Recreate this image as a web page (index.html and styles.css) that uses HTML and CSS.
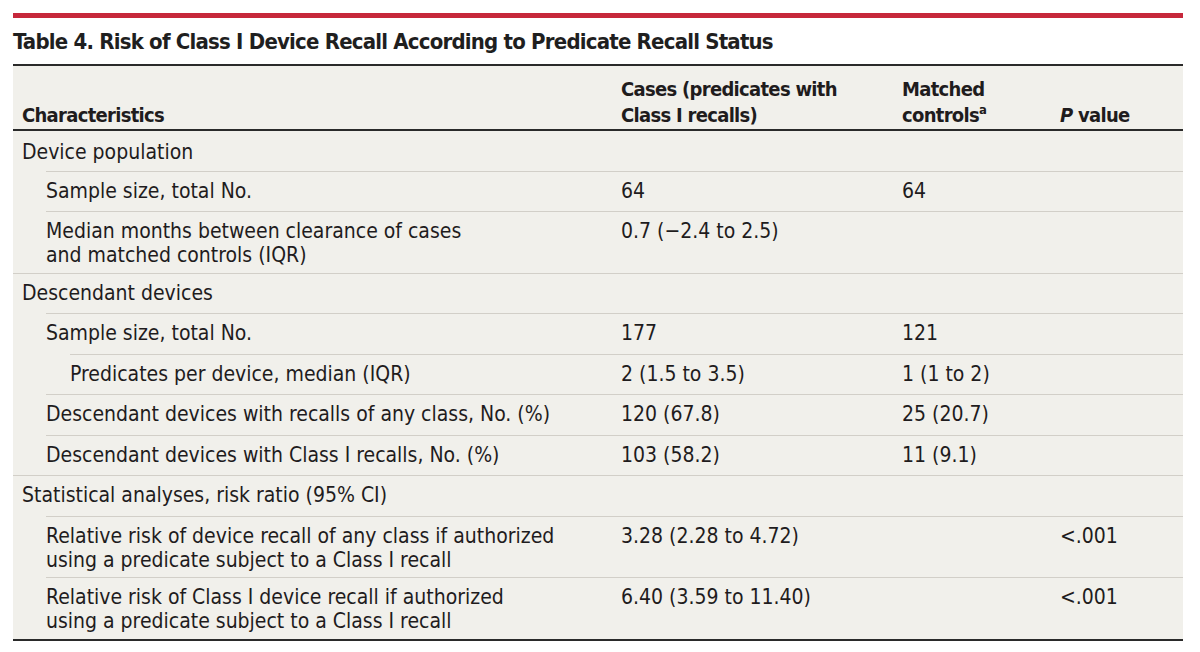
FILE: index.html
```html
<!DOCTYPE html>
<html>
<head>
<meta charset="utf-8">
<link rel="stylesheet" href="styles.css">
</head>
<body>
<div class="page">
  <div class="redbar"></div>
  <h1 class="title">Table 4. Risk of Class I Device Recall According to Predicate Recall Status</h1>
  <div class="table">
    <div class="row head">
      <div class="cell label">Characteristics</div>
      <div class="cell">Cases (predicates with<br>Class I recalls)</div>
      <div class="cell">Matched<br>controls<sup>a</sup></div>
      <div class="cell"><i>P</i> value</div>
    </div>
    <div class="row lvl0 nobord">
      <div class="cell label">Device population</div>
      <div class="cell"></div><div class="cell"></div><div class="cell"></div>
    </div>
    <div class="row lvl1">
      <div class="cell label">Sample size, total No.</div>
      <div class="cell">64</div><div class="cell">64</div><div class="cell"></div>
    </div>
    <div class="row lvl1 double">
      <div class="cell label">Median months between clearance of cases<br>and matched controls (IQR)</div>
      <div class="cell">0.7 (−2.4 to 2.5)</div><div class="cell"></div><div class="cell"></div>
    </div>
    <div class="row lvl0">
      <div class="cell label">Descendant devices</div>
      <div class="cell"></div><div class="cell"></div><div class="cell"></div>
    </div>
    <div class="row lvl1">
      <div class="cell label">Sample size, total No.</div>
      <div class="cell">177</div><div class="cell">121</div><div class="cell"></div>
    </div>
    <div class="row lvl2">
      <div class="cell label">Predicates per device, median (IQR)</div>
      <div class="cell">2 (1.5 to 3.5)</div><div class="cell">1 (1 to 2)</div><div class="cell"></div>
    </div>
    <div class="row lvl1">
      <div class="cell label">Descendant devices with recalls of any class, No. (%)</div>
      <div class="cell">120 (67.8)</div><div class="cell">25 (20.7)</div><div class="cell"></div>
    </div>
    <div class="row lvl1">
      <div class="cell label">Descendant devices with Class I recalls, No. (%)</div>
      <div class="cell">103 (58.2)</div><div class="cell">11 (9.1)</div><div class="cell"></div>
    </div>
    <div class="row lvl0">
      <div class="cell label">Statistical analyses, risk ratio (95% CI)</div>
      <div class="cell"></div><div class="cell"></div><div class="cell"></div>
    </div>
    <div class="row lvl1 double">
      <div class="cell label">Relative risk of device recall of any class if authorized<br>using a predicate subject to a Class I recall</div>
      <div class="cell">3.28 (2.28 to 4.72)</div><div class="cell"></div><div class="cell">&lt;.001</div>
    </div>
    <div class="row lvl1 double last">
      <div class="cell label">Relative risk of Class I device recall if authorized<br>using a predicate subject to a Class I recall</div>
      <div class="cell">6.40 (3.59 to 11.40)</div><div class="cell"></div><div class="cell">&lt;.001</div>
    </div>
  </div>
</div>
</body>
</html>
```

FILE: styles.css
```css
html, body {
  margin: 0;
  padding: 0;
  background: #ffffff;
}

body {
  font-family: "DejaVu Sans Condensed", "DejaVu Sans", sans-serif;
  font-stretch: condensed;
  color: #1f1c1d;
}

.page {
  width: 1170px;
  padding: 13px 17px 0 13px;
}

.redbar {
  height: 5px;
  background: #c6283b;
}

.title {
  margin: 0;
  height: 46px;
  box-sizing: border-box;
  padding-top: 10px;
  font-size: 22px;
  letter-spacing: -0.8px;
  line-height: 28px;
  font-weight: bold;
  color: #1f1f1f;
}

.table {
  background: #f1f0eb;
  border-top: 2px solid #2a2a2a;
  border-bottom: 2px solid #2a2a2a;
  font-size: 21px;
}

.row {
  --ind: 0px;
  display: grid;
  grid-template-columns: calc(608px - var(--ind)) 281px 158px 1fr;
  margin-left: var(--ind);
  border-top: 1px solid #d2cfc8;
}

.cell {
  padding: 7px 0 8.5px;
  line-height: 24px;
  white-space: nowrap;
}

.lvl0 .label { padding-left: 9px; }
.lvl1 { --ind: 33px; }
.lvl2 { --ind: 57px; }

.nobord { border-top: none; }
.nobord .cell { padding-top: 8.5px; padding-bottom: 7px; }

.double .cell { padding-bottom: 5.5px; }

.head {
  border-top: none;
  border-bottom: 2px solid #2a2a2a;
  height: 65px;
  box-sizing: border-box;
  align-items: end;
  font-weight: bold;
  font-size: 20px;
  letter-spacing: -0.7px;
}

.head .cell {
  padding: 0 0 1px;
  line-height: 26px;
}

.head .label { padding-left: 9px; }

.head sup {
  font-size: 13px;
  line-height: 0;
  letter-spacing: 0;
  vertical-align: 8px;
}
```
